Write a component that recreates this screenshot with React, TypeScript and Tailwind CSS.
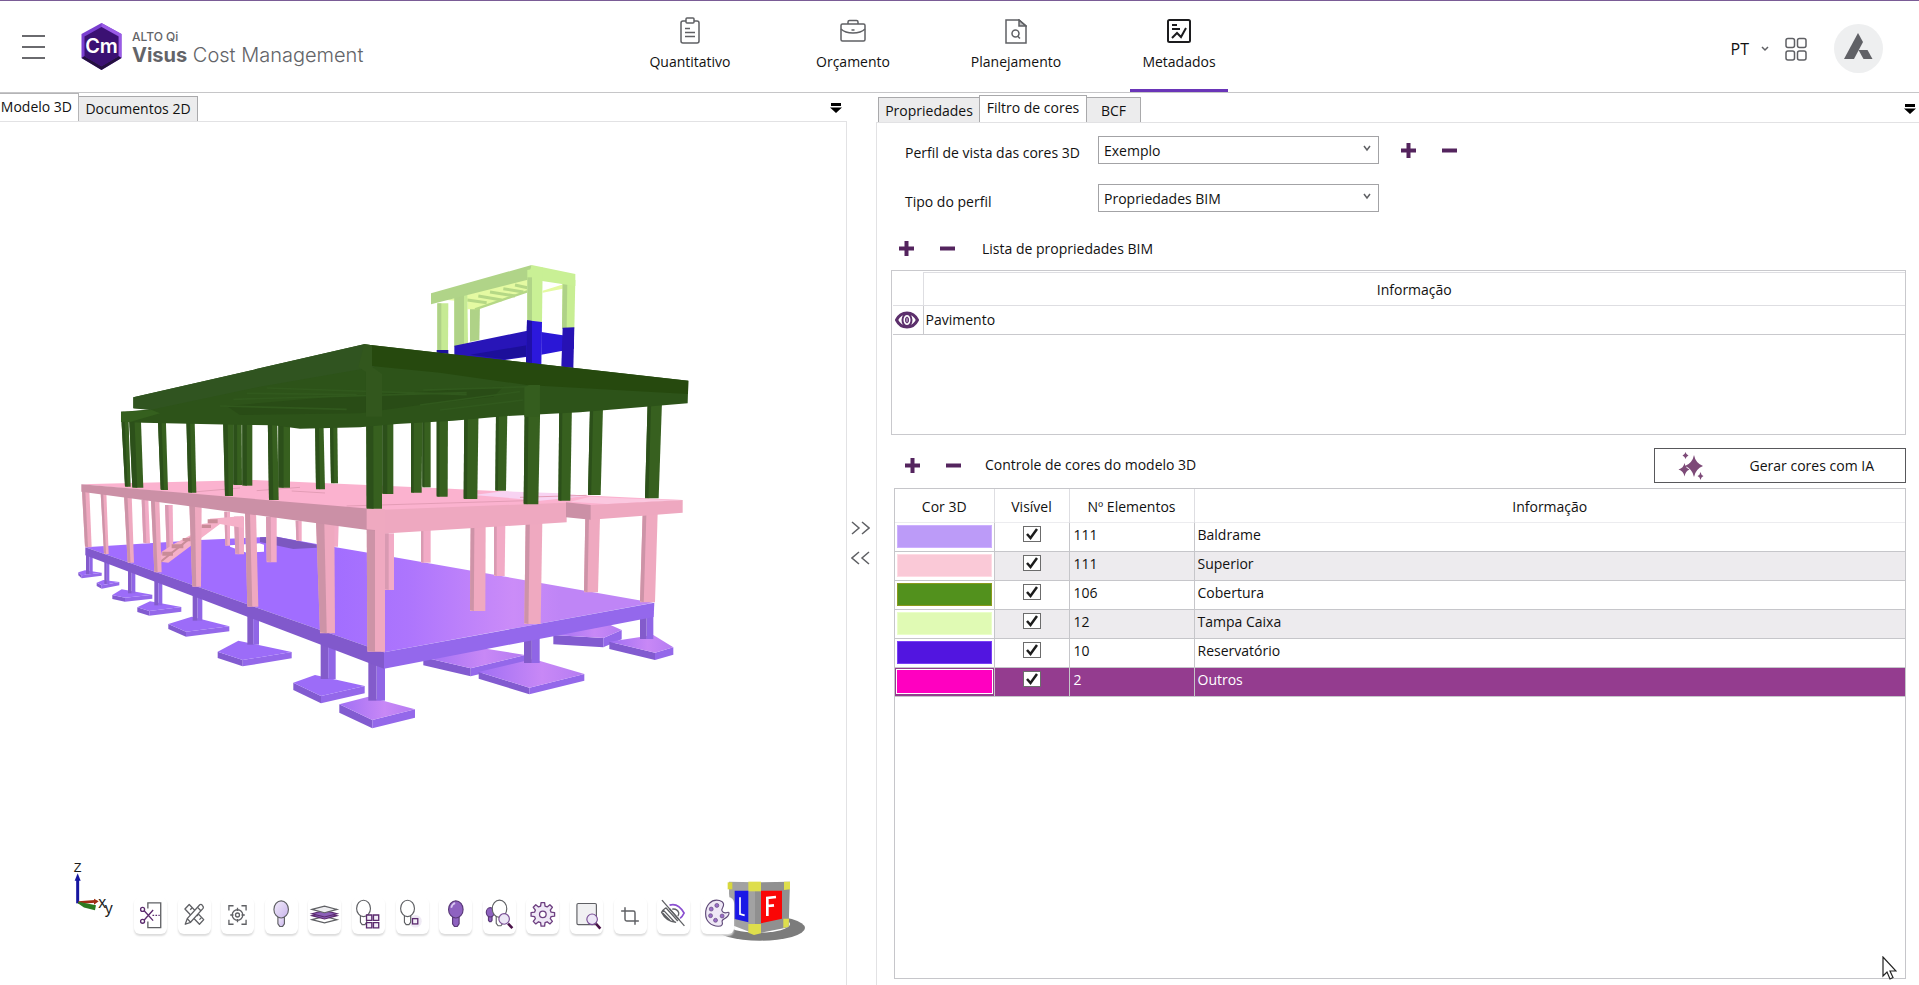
import React, { useState } from 'react';
import { Crop } from 'lucide-react';

// ==========================================
// Types & Data
// ==========================================

interface ColorRow {
  color: string;
  edge: string;
  count: number;
  name: string;
}

const COLOR_ROWS: ColorRow[] = [
  { color: 'bg-[#bc9bf8]', edge: 'border-[#cdb0ff]', count: 111, name: 'Baldrame' },
  { color: 'bg-[#fac9d7]', edge: 'border-[#ffdbe4]', count: 111, name: 'Superior' },
  { color: 'bg-[#52911d]', edge: 'border-[#8a9a1d]', count: 106, name: 'Cobertura' },
  { color: 'bg-[#e0fab4]', edge: 'border-[#eaffc8]', count: 12, name: 'Tampa Caixa' },
  { color: 'bg-[#5215e0]', edge: 'border-[#7a3ff5]', count: 10, name: 'Reservatório' },
  { color: 'bg-[#ff00c0]', edge: 'border-[#ff00c0]', count: 2, name: 'Outros' },
];

const GRAY = '#5f6064';
const PURPLE = '#5b2a6e';

// ==========================================
// Header
// ==========================================

const ClipboardIcon = () => (
  <svg width="20" height="28" viewBox="0 0 20 28" fill="none" stroke={GRAY} strokeWidth="1.5">
    <path d="M6 4H3a2 2 0 0 0-2 2v18a2 2 0 0 0 2 2h14a2 2 0 0 0 2-2V6a2 2 0 0 0-2-2h-3" />
    <rect x="6" y="1" width="8" height="5" rx="1" />
    <path d="M5 11.5h5M5 15.5h10M5 19.5h10" />
  </svg>
);

const BriefcaseIcon = () => (
  <svg width="26" height="24" viewBox="0 0 26 24" fill="none" stroke={GRAY} strokeWidth="1.5">
    <rect x="1" y="5" width="24" height="17" rx="1.5" />
    <path d="M8 5V3a1.5 1.5 0 0 1 1.500-1.500h7A1.500 1.500 0 0 1 18 3v2M1 10c3 3 7 4 12 4s9-1 12-4M11.500 11h3" />
  </svg>
);

const PlanIcon = () => (
  <svg width="22" height="25" viewBox="0 0 22 25" fill="none" stroke={GRAY} strokeWidth="1.5">
    <path d="M1 1h13l7 6v17H1z" />
    <path d="M14 1v6h7z" fill={GRAY} fillOpacity="0.4" />
    <circle cx="10.500" cy="14.500" r="3.500" />
    <path d="M12.500 17l2.500 2.500" />
  </svg>
);

const MetaIcon = () => (
  <svg width="24" height="25" viewBox="0 0 24 25" fill="none" stroke="#1c1c1e" strokeWidth="2">
    <rect x="1" y="1" width="22" height="22" rx="1.500" />
    <path d="M5 6h5M5 10h8" />
    <path d="M5 19l5-5 4 4 5-9" />
  </svg>
);

const NAV = [
  { label: 'Quantitativo', icon: <ClipboardIcon /> },
  { label: 'Orçamento', icon: <BriefcaseIcon /> },
  { label: 'Planejamento', icon: <PlanIcon /> },
  { label: 'Metadados', icon: <MetaIcon />, active: true },
];

const Logo = () => (
  <div className="flex items-center gap-[10px]">
    <svg width="41" height="47" viewBox="0 0 41 47">
      <path d="M20.500 0L40.500 11v24L20.500 47 0.500 35V11z" fill="#7a3fd0" />
      <path d="M20.500 0L40.500 11v24l-3-2V13L20.500 4z" fill="#9a5be6" />
      <path d="M0.500 35L20.500 47l20-12-3-2-17 10-17-10z" fill="#24103f" />
      <path d="M20.500 4l17 9.500v20l-17 10-17-10v-20z" fill="#3b1173" />
      <text x="20.500" y="30" textAnchor="middle" fontSize="20" fontWeight="600" fill="#fff" fontFamily="Inter, sans-serif">Cm</text>
    </svg>
    <div className="pt-1 font-['Inter',sans-serif] text-[#636468]">
      <div className="text-xs leading-3 font-medium">ALTO Qi</div>
      <div className="text-xl leading-6 font-light"><b className="font-bold">Visus</b> Cost Management</div>
    </div>
  </div>
);

const Header = () => (
  <header className="flex h-[93px] shrink-0 items-stretch border-t border-b border-t-[#7a5c96] border-b-[#c6c6c8]">
    <div className="flex flex-1 items-center gap-9 pl-[22px]">
      <button aria-label="Menu" className="flex flex-col gap-[9px]">
        <span className="h-[2px] w-[23px] bg-[#6a6a6e]" />
        <span className="h-[2px] w-[23px] bg-[#6a6a6e]" />
        <span className="h-[2px] w-[23px] bg-[#6a6a6e]" />
      </button>
      <Logo />
    </div>
    <nav className="mr-9 flex gap-[65px]">
      {NAV.map(item => (
        <button
          key={item.label}
          className={`flex w-[98px] flex-col items-center border-b-[3px] pt-4 ${item.active ? 'border-[#6a35b8]' : 'border-transparent'}`}
        >
          <span className="flex h-7 items-center">{item.icon}</span>
          <span className="mt-[7px] leading-5">{item.label}</span>
        </button>
      ))}
    </nav>
    <div className="flex flex-1 items-center justify-end pt-1 pr-9">
      <button className="flex items-center gap-3 text-base">
        PT
        <svg width="8" height="6" viewBox="0 0 8 6" fill="none" stroke={GRAY} strokeWidth="1.500"><path d="M1 1l3 3 3-3" /></svg>
      </button>
      <button aria-label="Aplicativos" className="ml-4">
        <svg width="22" height="24" viewBox="0 0 22 24" fill="none" stroke={GRAY} strokeWidth="1.500">
          <rect x="1" y="1.500" width="8.500" height="9" rx="2" />
          <rect x="12.500" y="1.500" width="8.500" height="9" rx="2" />
          <rect x="1" y="14" width="8.500" height="9" rx="2" />
          <rect x="12.500" y="14" width="8.500" height="9" rx="2" />
        </svg>
      </button>
      <button aria-label="Conta" className="ml-[27px]">
        <svg width="49" height="49" viewBox="0 0 49 49">
          <circle cx="24.500" cy="24.500" r="24.500" fill="#eeeff0" />
          <path d="M24 9l5 9-9 17H10z" fill="#606166" />
          <path d="M24.500 26h9l5 9h-9z" fill="#606166" />
        </svg>
      </button>
    </div>
  </header>
);

// ==========================================
// 3D model
// ==========================================

// [topLeft, topRight, bottomLeft, bottomRight, top, bottom]
type Column = [number, number, number, number, number, number];

const PINK_BACK: Column[] = [
  [245, 265, 250, 270, 750, 880], [315, 338, 320, 340, 765, 900], [493, 510, 496, 510, 785, 887],
  [522, 552, 526, 552, 800, 913], [618, 650, 620, 650, 800, 937], [707, 725, 709, 725, 812, 873],
  [800, 836, 802, 834, 825, 890], [973, 1002, 973, 1002, 850, 1020], [1083, 1112, 1083, 1112, 840, 938],
  [1302, 1336, 1302, 1334, 825, 978],
];
const PINK_FRONT: Column[] = [
  [66, 88, 75, 95, 722, 892], [122, 139, 132, 146, 728, 912], [192, 215, 203, 222, 735, 938],
  [273, 298, 283, 305, 750, 967], [388, 425, 397, 423, 760, 1010], [555, 588, 562, 595, 780, 1070],
  [768, 823, 780, 825, 810, 1150], [920, 975, 922, 975, 775, 1205], [1232, 1277, 1230, 1276, 825, 1083],
  [1397, 1447, 1393, 1442, 815, 1122], [1576, 1620, 1572, 1614, 800, 1027], [1748, 1793, 1740, 1785, 790, 1057],
];
const GREEN: Column[] = [
  [810, 832, 813, 834, 530, 700], [520, 545, 520, 546, 520, 705], [547, 577, 547, 577, 520, 707],
  [655, 690, 655, 690, 430, 713], [1087, 1112, 1087, 1112, 510, 712], [1308, 1342, 1306, 1338, 490, 722],
  [967, 1000, 967, 1000, 500, 732], [1053, 1087, 1053, 1085, 490, 728], [183, 205, 195, 212, 485, 710],
  [208, 243, 217, 250, 515, 713], [293, 317, 302, 324, 490, 720], [378, 403, 385, 409, 470, 728],
  [488, 520, 495, 519, 460, 738], [765, 790, 768, 795, 500, 718], [622, 650, 627, 656, 420, 750],
  [1130, 1164, 1130, 1163, 470, 740], [1213, 1256, 1211, 1252, 455, 747], [1498, 1536, 1495, 1531, 455, 752],
  [1590, 1629, 1584, 1622, 470, 735], [1763, 1806, 1755, 1796, 455, 745], [1395, 1442, 1391, 1435, 400, 763],
  [918, 966, 920, 966, 365, 776],
];

// left, top, right, bottom corner, thickness, stem x1, stem x2, stem top
type Base = [number, number, number, number, number, number, number, number, number, number, number, number];
const BASES: Base[] = [
  [55, 967, 75, 961, 125, 968, 65, 976, 9, 78, 98, 905],
  [110, 998, 130, 990, 178, 996, 125, 1006, 10, 133, 148, 930],
  [157, 1035, 185, 1018, 277, 1034, 195, 1043, 12, 204, 226, 960],
  [232, 1072, 270, 1054, 364, 1071, 268, 1083, 14, 283, 307, 985],
  [325, 1122, 395, 1100, 508, 1129, 378, 1145, 15, 398, 427, 1035],
  [473, 1205, 535, 1172, 695, 1206, 548, 1230, 19, 562, 597, 1090],
  [700, 1298, 765, 1275, 914, 1308, 783, 1338, 22, 782, 827, 1175],
  [1090, 1222, 1240, 1190, 1395, 1215, 1232, 1255, 24, 1392, 1400, 1180],
  [838, 1363, 925, 1340, 1065, 1378, 937, 1410, 25, 925, 975, 1230],
  [1256, 1266, 1420, 1227, 1573, 1272, 1408, 1313, 20, 1392, 1439, 1150],
  [1480, 1155, 1640, 1120, 1685, 1140, 1630, 1164, 28, 1600, 1610, 1110],
  [1648, 1175, 1780, 1155, 1840, 1192, 1785, 1208, 22, 1740, 1780, 1085],
];

const Columns = ({ items, light, dark }: { items: Column[]; light: string; dark: string }) => (
  <>
    {items.map(([a, b, c, d, top, bottom], i) => {
      // left columns show more of their shaded side
      const m = a < 1000 ? 0.45 : 0.25;
      return (
        <g key={i}>
          <polygon points={`${a},${top} ${b},${top} ${d},${bottom} ${c},${bottom}`} fill={light} />
          <polygon points={`${a},${top} ${a + (b - a) * m},${top} ${c + (d - c) * m},${bottom} ${c},${bottom - 3}`} fill={dark} />
        </g>
      );
    })}
  </>
);

const BuildingModel = () => (
  <g transform="translate(60 250) scale(0.333333)">
    {BASES.map(([lx, ly, tx, ty, rx, ry, bx, by, th, s1, s2, st], i) => (
      <g key={i}>
        <polygon points={`${lx},${ly} ${bx},${by} ${bx},${by + th} ${lx},${ly + th}`} fill="#825bd0" />
        <polygon points={`${bx},${by} ${rx},${ry} ${rx},${ry + th} ${bx},${by + th}`} fill="#9468ea" />
        <polygon points={`${lx},${ly} ${tx},${ty} ${rx},${ry} ${bx},${by}`} fill={i > 6 ? 'url(#pad)' : '#9c6cf8'} />
        <rect x={s1} y={st} width={(s2 - s1) / 2} height={ty + 12 - st} fill="#835bcb" />
        <rect x={(s1 + s2) / 2} y={st} width={(s2 - s1) / 2} height={ty + 12 - st} fill="#9066e6" />
      </g>
    ))}

    <polygon points="76,892 420,870 600,862 650,860 770,882 1004,922 1780,1058 972,1207" fill="url(#floor)" />
    <polygon points="600,862 650,860 770,884 770,893 700,897 600,876" fill="#7c58c0" />
    <polygon points="510,886 598,880 612,884 612,905 560,908 510,890" fill="#fff" />
    <polygon points="76,892 972,1207 972,1256 76,916" fill="#8159cc" />
    <polygon points="972,1207 1783,1058 1781,1101 972,1256" fill="#9468ec" />

    <Columns items={PINK_BACK} light="#f2abc6" dark="#d99ab2" />
    <polygon points="300,935 325,938 480,822 550,834 550,798 450,806 445,820 425,822 420,840 380,862 345,880 305,905" fill="#f5b0c8" />
    <path d="M443 808h30v12h-30zM425 824h28v10h-28zM368 864h25v10h-25zM335 883h35v12h-35zM307 905h32v12h-32z" fill="#c98c98" />
    <path d="M300 937l110-88" stroke="#c98c98" strokeWidth="6" />
    <Columns items={PINK_FRONT} light="#efa9c0" dark="#cd93a7" />

    <polygon points="64,703 580,690 1140,715 1440,730 1868,750 1592,768 950,785" fill="#fbb2cf" />
    <polygon points="1240,735 1330,724 1500,730 1580,738 1440,752" fill="#f8d3f2" />
    <polygon points="1530,755 1590,740 1720,746 1868,750 1640,762" fill="#fbc8e0" />
    <path d="M400 726l140-12M590 722l130-10M695 723l100 6M860 768l540-16M1380 742l200-6" stroke="#e39db6" strokeWidth="3" fill="none" />
    <polygon points="64,703 950,778 950,844 64,725" fill="#cb90a6" />
    <polygon points="950,780 1520,758 1520,817 950,852" fill="#eea8c0" />
    <polygon points="920,776 975,778 975,1204 945,1204 945,840 920,838" fill="#efa9c0" />
    <polygon points="1518,757 1593,765 1593,809 1518,802" fill="#cb90a6" />
    <polygon points="1592,765 1868,750 1868,788 1592,809" fill="#eea8c0" />

    <Columns items={GREEN} light="#37601f" dark="#2c501a" />

    {/* water tank and its cover */}
    <g transform="translate(960 0)">
      <polygon points="172,160 205,160 204,302 172,302" fill="#c6ea94" />
      <polygon points="172,160 184,160 184,302 172,302" fill="#afd287" />
      <polygon points="270,160 300,160 298,270 270,275" fill="#afd287" />
      <polygon points="200,150 442,85 442,125 290,178 262,178 262,155" fill="#e4faa2" />
      <path d="M262 150l58 8M295 138l70 12M330 126l75 12M370 116l60 10M405 105l37 8" stroke="#b5d886" strokeWidth="9" />
      <path d="M285 178l157-54" stroke="#b5d886" strokeWidth="7" />
      <polygon points="223,130 262,130 264,282 223,290" fill="#c6ea94" />
      <polygon points="223,130 252,130 252,285 223,290" fill="#afd287" />
      <polygon points="488,122 560,100 560,114 488,128" fill="#e4faa2" />
      <polygon points="548,95 586,90 583,236 546,236" fill="#c8ee93" />
      <polygon points="548,95 562,95 560,236 546,236" fill="#afd287" />
      <polygon points="153,130 455,45 455,86 153,163" fill="#b0d488" />
      <polygon points="455,45 586,72 586,108 486,93 442,88" fill="#c9f095" />
      <polygon points="442,60 488,52 486,216 442,214" fill="#c9f095" />
      <polygon points="442,82 456,82 456,214 442,214" fill="#b0d488" />
      <polygon points="170,300 205,300 205,312 170,308" fill="#1c129a" />
      <polygon points="223,287 442,242 442,320 360,332 223,318" fill="#2815b8" />
      <polygon points="270,314 440,286 440,318 375,328" fill="#1c0f9a" />
      <polygon points="484,246 548,256 582,250 582,296 548,302 484,314" fill="#2a17d6" />
      <polygon points="441,211 486,216 484,345 438,340" fill="#2c18dc" />
      <polygon points="441,211 456,213 456,340 438,340" fill="#2010a8" />
      <polygon points="548,233 583,232 580,354 544,350" fill="#2712b4" />
    </g>

    {/* roof */}
    <polygon points="220,442 912,283 1885,392 1883,460 1560,487 1340,498 1180,512 1010,522 900,532 720,536 640,526 560,525 250,518 183,515 183,486 275,478 220,475" fill="#2d5319" />
    <polygon points="183,486 275,480 300,490 210,516 183,515" fill="#35601e" />
    <polygon points="500,468 820,440 1330,410 1300,440 1080,465 900,490 540,495" fill="#294c16" />
    <path d="M620 414l600 20M560 430l330 4M520 448l700 -20M480 468l380 10M1090 420l320-10M1080 465l300-40M1140 480l250-30" stroke="#31591d" strokeWidth="5" fill="none" />
    <polygon points="220,442 912,283 945,350 600,410 270,480 220,475" fill="#305420" />
    <polygon points="912,283 1885,392 1884,432 1400,405 1140,368 935,348" fill="#26490e" />
    <polygon points="912,283 936,286 936,350 966,372 966,500 918,500 918,365 895,352" fill="#32571d" />
    <polygon points="1408,405 1440,405 1440,500 1393,500 1393,412" fill="#345d1e" />
  </g>
);

const AxisGizmo = () => (
  <g transform="translate(50 850) scale(0.333333)">
    <path d="M83 160V88" stroke="#1616a0" strokeWidth="9" />
    <path d="M74 92l9-22 9 22z" fill="#1616a0" />
    <path d="M85 158l50-4" stroke="#a02c14" strokeWidth="8" />
    <path d="M132 146l14 8-14 10z" fill="#a02c14" />
    <path d="M85 158l50 10-2 10 -30-8z" fill="#2c7a20" stroke="#2c7a20" strokeWidth="5" />
    <g fontFamily="Liberation Sans, sans-serif" fontSize="48" fill="#1c1c1c">
      <text x="71" y="67" fontSize="38">Z</text>
      <text x="145" y="174">x</text>
      <text x="164" y="192">y</text>
    </g>
  </g>
);

const ViewCube = () => (
  <g transform="translate(430 850) scale(0.333333)">
    <ellipse cx="990" cy="234" rx="135" ry="38" fill="#7c7c7c" />
    <ellipse cx="985" cy="222" rx="95" ry="26" fill="#fff" />
    <polygon points="897,95 975,97 975,252 905,225 897,130" fill="#a2a2a2" />
    <polygon points="975,97 1080,95 1076,232 975,252" fill="#909090" />
    <polygon points="893,97 907,97 907,118 893,118" fill="#d8d83c" />
    <polygon points="955,95 993,95 993,124 955,124" fill="#dede4c" />
    <polygon points="1062,95 1080,95 1080,118 1062,120" fill="#dede4c" />
    <polygon points="955,222 993,222 993,250 972,255 955,248" fill="#dede4c" />
    <polygon points="1060,206 1077,206 1076,230 1060,234" fill="#dede4c" />
    <polygon points="914,122 955,122 955,217 914,207" fill="#1a18e6" />
    <polygon points="993,122 1056,122 1056,206 993,220" fill="#fa0606" />
    <path d="M930 142v50l14 4" stroke="#fff" strokeWidth="5" fill="none" />
    <path d="M1012 198v-54l26-3M1012 168l20-2" stroke="#fff" strokeWidth="8" fill="none" />
  </g>
);

// ==========================================
// Viewer toolbar
// ==========================================

const Bulb = ({ x, y, r, fill, stroke = GRAY }: { x: number; y: number; r: number; fill: string; stroke?: string }) => (
  <g fill={fill} stroke={stroke} strokeWidth="3.500">
    <path d={`M${x - r * 0.45} ${y + r}v${r}l${r * 0.25} ${r * 0.35}h${r * 0.4}l${r * 0.25} ${-r * 0.35}v${-r}z`} />
    <ellipse cx={x} cy={y} rx={r} ry={r * 1.18} />
  </g>
);

const Lens = ({ x, y }: { x: number; y: number }) => (
  <g>
    <path d={`M${x + 12} ${y + 14}l13 14`} stroke="#4a1248" strokeWidth="8" />
    <circle cx={x} cy={y} r="16" fill="#ece6f6" stroke="#7a4f96" strokeWidth="3.500" />
  </g>
);

const diamond = (y: number) => `M12 ${y}l38-10 38 10-38 10z`;

const GearShape = () => {
  const pts: string[] = [];
  for (let i = 0; i < 8; i++) {
    [[-0.26, 26], [-0.15, 36], [0.15, 36], [0.26, 26]].forEach(([da, r]) => {
      const a = (i * Math.PI) / 4 + da;
      pts.push(`${(51 + r * Math.sin(a)).toFixed(1)},${(52 - r * Math.cos(a)).toFixed(1)}`);
    });
  }
  return <polygon points={pts.join(' ')} fill="#efe8f6" stroke="#6d3f80" strokeWidth="4" strokeLinejoin="round" />;
};

const TOOLS: { label: string; art?: React.ReactNode; icon?: React.ReactNode }[] = [
  {
    label: 'Plano de corte',
    art: (
      <g fill="none" strokeWidth="4">
        <path d="M42 34V17h39v75H42V74" stroke={GRAY} />
        <g stroke={PURPLE}>
          <circle cx="26" cy="37" r="6" />
          <circle cx="26" cy="73" r="6" />
          <path d="M31 41l27 30M31 69l27-30" />
          <path d="M56 55h22" strokeDasharray="5 4" />
        </g>
      </g>
    ),
  },
  {
    label: 'Medir',
    art: (
      <g fill="#fff" stroke={GRAY} strokeWidth="4" strokeLinejoin="round">
        <path d="M34 22l44 46-13 14-44-46z" />
        <path d="M43 32l-6 6M52 42l-6 6M62 52l-5 5M71 62l-6 6" />
        <path d="M66 23q4-3 8 2 5 5 2 9L38 76l-16 6 6-17zM59 30l10 11M28 65l10 11" />
      </g>
    ),
  },
  {
    label: 'Centralizar',
    art: (
      <g fill="none" stroke={GRAY} strokeWidth="4">
        <path d="M24 40V26h14M62 26h14v14M76 68v14H62M38 82H24V68" />
        <circle cx="50" cy="54" r="16" />
        <circle cx="50" cy="54" r="6" />
        <path d="M50 32v10M50 66v10M28 54h10M62 54h10" />
      </g>
    ),
  },
  { label: 'Iluminar', art: <Bulb x={49} y={37} r={22} fill="url(#bulbLight)" /> },
  {
    label: 'Camadas',
    art: (
      <g stroke={GRAY} strokeWidth="3.500">
        <path d={diamond(68)} fill="#fff" />
        <path d={diamond(56)} fill="#8b5fb8" stroke={PURPLE} />
        <path d={diamond(50)} fill="#8b5fb8" stroke={PURPLE} />
        <path d={diamond(37)} fill="#ededf0" />
      </g>
    ),
  },
  {
    label: 'Mostrar grupo',
    art: (
      <g>
        <Bulb x={35} y={34} r={21} fill="#fff" />
        <path d="M44 54h16v16H44zM65 54h16v16H65zM44 77h16v16H44zM65 77h16v16H65z" fill="#f3eef8" stroke={PURPLE} strokeWidth="4" />
      </g>
    ),
  },
  {
    label: 'Mostrar elemento',
    art: (
      <g>
        <circle cx="59" cy="73" r="19" fill="#efeaf4" />
        <Bulb x={35} y={34} r={21} fill="#fff" />
        <rect x="50" y="65" width="16" height="16" fill="#f3eef8" stroke={PURPLE} strokeWidth="4" />
      </g>
    ),
  },
  {
    label: 'Acender',
    art: (
      <g>
        <Bulb x={51} y={37} r={22} fill="#8e62c0" stroke="#5a3a78" />
        <path d="M37 32q3-12 12-14" stroke="#d9c7f0" strokeWidth="5" fill="none" />
      </g>
    ),
  },
  {
    label: 'Buscar luz',
    art: (
      <g>
        <Bulb x={22} y={46} r={12} fill="#8e62c0" stroke="#5a3a78" />
        <Bulb x={50} y={35} r={22} fill="#fff" />
        <Lens x={64} y={66} />
      </g>
    ),
  },
  {
    label: 'Configurações',
    art: (
      <g>
        <GearShape />
        <circle cx="51" cy="52" r="10" fill="#fff" stroke="#6d3f80" strokeWidth="4" />
      </g>
    ),
  },
  {
    label: 'Zoom na janela',
    art: (
      <g>
        <rect x="21" y="19" width="59" height="64" rx="4" fill="#f0f0f2" stroke={GRAY} strokeWidth="3.500" />
        <Lens x={67} y={67} />
      </g>
    ),
  },
  { label: 'Recortar', icon: <Crop size={20} color={GRAY} strokeWidth={1.75} /> },
  {
    label: 'Ocultar',
    art: (
      <g fill="none" stroke={GRAY} strokeWidth="4">
        <path d="M38 24q26-8 44 24-6 12-12 16" stroke="#8a4fd0" strokeWidth="5" />
        <path d="M46 36q16-2 20 12 0 6-3 9" />
        <path d="M27 32Q18 38 14 46q14 28 44 30M27 32l36 40M20 40l34 36M38 35l30 34M17 48l22 22" />
        <path d="M15 9l68 78" />
      </g>
    ),
  },
  {
    label: 'Cores',
    art: (
      <g stroke="#5f4a78" strokeWidth="3.500" fill="#efe8f6">
        <path d="M56 10C30 4 14 26 14 50c0 24 18 38 38 38 14 0 14-8 12-14-3-9 20-8 21-26 0-4-4-2-8-1-10 2-18-6-12-14 4-7 8-18-9-23z" />
        <g fill="#9a6cc8" strokeWidth="2">
          <circle cx="48" cy="25" r="6" /><circle cx="31" cy="36" r="6" /><circle cx="29" cy="56" r="6" />
          <circle cx="44" cy="70" r="6" /><circle cx="64" cy="57" r="6" />
        </g>
      </g>
    ),
  },
];

const ViewerToolbar = () => (
  <div className="absolute bottom-[51px] left-[134px] flex w-[600px] justify-between">
    {TOOLS.map(tool => (
      <button
        key={tool.label}
        aria-label={tool.label}
        className="flex h-[37px] w-[33px] items-center justify-center rounded-md bg-white shadow-[0_2px_2px_#dcdcdc]"
      >
        {tool.icon || <svg width="33" height="37" viewBox="0 0 100 111">{tool.art}</svg>}
      </button>
    ))}
  </div>
);

// ==========================================
// Shared bits
// ==========================================

const TabMenuIcon = () => (
  <svg width="12" height="10" viewBox="0 0 12 10"><path d="M1 0h10v3H1zM0 4.500h12L6 10z" fill="#000" /></svg>
);

const Sign = ({ kind, label }: { kind: 'plus' | 'minus'; label: string }) => (
  <button aria-label={label}>
    <svg width="17" height="17" viewBox="0 0 17 17" stroke="#54245e" strokeWidth="4">
      <path d={kind === 'plus' ? 'M1 8.500h15M8.500 1v15' : 'M1 8.500h15'} />
    </svg>
  </button>
);

const SelectBox = ({ id, value }: { id: string; value: string }) => (
  <div className="relative w-[281px]">
    <select id={id} className="h-7 w-full appearance-none border border-[#a3a3a6] bg-white pt-px pl-[5px]">
      <option>{value}</option>
    </select>
    <svg className="pointer-events-none absolute top-[9px] right-2" width="8" height="7" viewBox="0 0 8 7" fill="none" stroke={GRAY} strokeWidth="1.500">
      <path d="M1 1l3 4 3-4" />
    </svg>
  </div>
);

const CheckCell = ({ name, checked, onChange }: { name: string; checked: boolean; onChange: () => void }) => (
  <span className="relative mx-auto block h-4 w-[18px]">
    <input
      type="checkbox"
      aria-label={`Visível ${name}`}
      checked={checked}
      onChange={onChange}
      className="block h-4 w-[18px] appearance-none border border-[#6c6c6c] bg-white"
    />
    {checked && (
      <svg className="pointer-events-none absolute inset-0" width="18" height="16" viewBox="0 0 18 16" fill="none" stroke="#1c1c1c" strokeWidth="2.500">
        <path d="M4 8l3.500 4L14 3" />
      </svg>
    )}
  </span>
);

// ==========================================
// Panels
// ==========================================

const ModelPanel = () => (
  <section className="flex min-w-0 flex-[847] flex-col">
    <div className="flex h-7 shrink-0 items-end">
      <button className="h-7 w-[79px] border-t border-r border-[#b4b4b6] bg-white pr-[6px] pb-[2px] whitespace-nowrap">
        <span className="float-right">Modelo 3D</span>
      </button>
      <button className="h-[25px] w-[119px] border-t border-r border-[#a9a9ab] bg-[#ececed] whitespace-nowrap">Documentos 2D</button>
      <button aria-label="Lista de abas" className="mr-[5px] mb-2 ml-auto"><TabMenuIcon /></button>
    </div>
    <div className="relative flex-1 border-t border-r border-[#e2e2e4]">
      <svg className="absolute inset-0 h-full w-full" viewBox="0 122 846 863">
        <defs>
          <linearGradient id="floor" gradientUnits="userSpaceOnUse" x1="800" y1="0" x2="1500" y2="0">
            <stop offset="0" stopColor="#a16dff" />
            <stop offset="0.35" stopColor="#ad75fd" />
            <stop offset="0.8" stopColor="#cb8cf8" />
            <stop offset="1" stopColor="#bf85f6" />
          </linearGradient>
          <linearGradient id="pad" x1="0" y1="0" x2="1" y2="0">
            <stop offset="0" stopColor="#a06ff4" />
            <stop offset="0.6" stopColor="#c888f6" />
            <stop offset="1" stopColor="#b57cf2" />
          </linearGradient>
          <linearGradient id="bulbLight" x1="0" y1="0" x2="1" y2="1">
            <stop offset="0" stopColor="#f2ecfa" />
            <stop offset="1" stopColor="#c9b4ec" />
          </linearGradient>
        </defs>
        <BuildingModel />
        <AxisGizmo />
        <ViewCube />
      </svg>
      <ViewerToolbar />
    </div>
  </section>
);

const Splitter = () => (
  <div className="flex w-[29px] shrink-0 flex-col items-center gap-4 pt-[428px] pr-[2px]">
    {['M1 1l7 6-7 6M11 1l7 6-7 6', 'M8 1L1 7l7 6M18 1l-7 6 7 6'].map((d, i) => (
      <button key={d} aria-label={i === 0 ? 'Expandir' : 'Recolher'}>
        <svg width="19" height="14" viewBox="0 0 19 14" fill="none" stroke={GRAY} strokeWidth="1.500"><path d={d} /></svg>
      </button>
    ))}
  </div>
);

const PropertyList = () => (
  <div className="mt-3 h-[165px] border border-[#c9c9cd] pt-px pl-px">
    <table className="w-full border-collapse">
      <thead>
        <tr className="h-[33px] border-b border-[#dedee2]">
          <th className="w-[30px] border-r border-[#dedee2]" />
          <th className="border-t border-[#dedee2] pt-[2px] font-normal">Informação</th>
        </tr>
      </thead>
      <tbody>
        <tr className="h-[29px] border-b border-[#c9c9cd]">
          <td className="border-r border-[#c9c9cd] pl-[2px]">
            <svg width="24" height="18" viewBox="0 0 24 18" fill="none" stroke="#5c2f6c">
              <path d="M1.500 9C4 4 8 2 12 2s8 2 10.500 7C20 14 16 16 12 16S4 14 1.500 9z" strokeWidth="3" />
              <ellipse cx="12" cy="9" rx="4.500" ry="6" strokeWidth="2" />
              <ellipse cx="12" cy="9" rx="1.500" ry="3" fill="#a58bb4" strokeWidth="1" />
            </svg>
          </td>
          <td className="pl-[2px]">Pavimento</td>
        </tr>
      </tbody>
    </table>
  </div>
);

const ColorTable = () => {
  const [visible, setVisible] = useState<boolean[]>(COLOR_ROWS.map(() => true));

  const toggle = (idx: number) => setVisible(visible.map((v, i) => (i === idx ? !v : v)));

  return (
    <div className="mt-[5px] ml-[3px] min-h-0 flex-1 border border-[#c6c6ca]">
      <table className="w-full table-fixed border-collapse">
        <colgroup>
          <col className="w-[99px]" />
          <col className="w-[75px]" />
          <col className="w-[125px]" />
          <col />
        </colgroup>
        <thead>
          <tr className="h-[33px] border-b border-[#ececef]">
            {['Cor 3D', 'Visível', 'Nº Elementos', 'Informação'].map(title => (
              <th key={title} className="border-r border-[#dedee2] pt-[3px] font-normal last:border-r-0">{title}</th>
            ))}
          </tr>
        </thead>
        <tbody>
          {COLOR_ROWS.map((row, idx) => {
            const selected = idx === COLOR_ROWS.length - 1;
            const tone = selected ? 'bg-[#943c8f] text-white' : idx % 2 ? 'bg-[#edebee]' : 'bg-white';
            return (
              <tr key={row.name} className={`h-[29px] border-b border-[#c6c6ca] ${tone}`}>
                <td className={`border-r border-[#c6c6ca] px-px py-0 ${selected ? '' : 'bg-white'}`}>
                  <div className={selected ? 'border border-white' : 'border border-transparent'}>
                    <div className={`h-[23px] border ${row.color} ${row.edge}`} />
                  </div>
                </td>
                <td className="border-r border-[#c6c6ca] pb-[6px] align-middle">
                  <CheckCell name={row.name} checked={visible[idx]} onChange={() => toggle(idx)} />
                </td>
                <td className="border-r border-[#c6c6ca] pb-1 pl-1">{row.count}</td>
                <td className="pb-1 pl-[3px]">{row.name}</td>
              </tr>
            );
          })}
        </tbody>
      </table>
    </div>
  );
};

const FilterPanel = () => (
  <section className="flex min-w-0 flex-[1043] flex-col">
    <div className="flex h-[29px] shrink-0 items-end pl-[2px]">
      <button className="h-[25px] w-[101px] border-t border-l border-[#a9a9ab] bg-[#ececed] pt-px">Propriedades</button>
      <button className="h-[27px] w-[108px] border-x border-t border-[#a9a9ab] bg-white pb-[2px] whitespace-nowrap">Filtro de cores</button>
      <button className="h-[25px] w-[54px] border-t border-r border-[#a9a9ab] bg-[#ececed] pt-px">BCF</button>
      <button aria-label="Lista de abas" className="mr-[3px] mb-2 ml-auto"><TabMenuIcon /></button>
    </div>
    <div className="flex flex-1 flex-col border-t border-l border-[#e2e2e4] pt-[13px] pr-[13px] pb-[6px] pl-[14px]">
      <div className="flex items-center pl-[14px]">
        <label htmlFor="perfil" className="w-[193px] pt-[6px]">Perfil de vista das cores 3D</label>
        <SelectBox id="perfil" value="Exemplo" />
        <div className="ml-[21px] flex gap-6">
          <Sign kind="plus" label="Adicionar perfil" />
          <Sign kind="minus" label="Remover perfil" />
        </div>
      </div>
      <div className="mt-5 flex items-center pl-[14px]">
        <label htmlFor="tipo" className="w-[193px] pt-2">Tipo do perfil</label>
        <SelectBox id="tipo" value="Propriedades BIM" />
      </div>
      <div className="mt-[26px] flex items-center gap-6 pl-[7px]">
        <Sign kind="plus" label="Adicionar propriedade" />
        <Sign kind="minus" label="Remover propriedade" />
        <span className="ml-[2px] pt-[2px] leading-[18px]">Lista de propriedades BIM</span>
      </div>
      <PropertyList />
      <div className="mt-[13px] flex items-center gap-6 pl-[13px]">
        <Sign kind="plus" label="Adicionar cor" />
        <Sign kind="minus" label="Remover cor" />
        <span className="-ml-px pb-[2px]">Controle de cores do modelo 3D</span>
        <button className="ml-auto flex h-[35px] w-[252px] items-center border border-[#58585b] pr-[31px] pl-[23px]">
          <svg width="26" height="28" viewBox="0 0 26 28" fill="#7d4a78">
            <path d="M16 3q1.500 8 9 11-7.500 3-9 11-1.500-8-9-11 7.500-3 9-11zM6.500 11q1 5 5 6.500-4 1.500-5 7-1-5.500-6-7 5-1.500 6-6.500zM7.500 0q.5 2.500 3 3.500-2.500 1-3 3.500-.5-2.500-3-3.500 2.500-1 3-3.500zM22.500 20q.5 3 3 4-2.500 1-3 4-.5-3-3-4 2.500-1 3-4z" />
          </svg>
          <span className="ml-auto">Gerar cores com IA</span>
        </button>
      </div>
      <ColorTable />
    </div>
  </section>
);

export default function App() {
  return (
    <div className="relative flex h-screen flex-col overflow-hidden bg-white font-['Open_Sans','Noto_Sans',sans-serif] text-sm text-[#111]">
      <Header />
      <main className="flex min-h-0 flex-1">
        <ModelPanel />
        <Splitter />
        <FilterPanel />
      </main>
      {/* mouse pointer */}
      <svg className="pointer-events-none absolute right-[22px] bottom-[4px]" width="15" height="25" viewBox="0 0 15 25" fill="#fff" stroke="#222" strokeWidth="1.200">
        <path d="M1 1v19l4-4 3 7 3-1.500-3-6.500h6z" />
      </svg>
    </div>
  );
}
